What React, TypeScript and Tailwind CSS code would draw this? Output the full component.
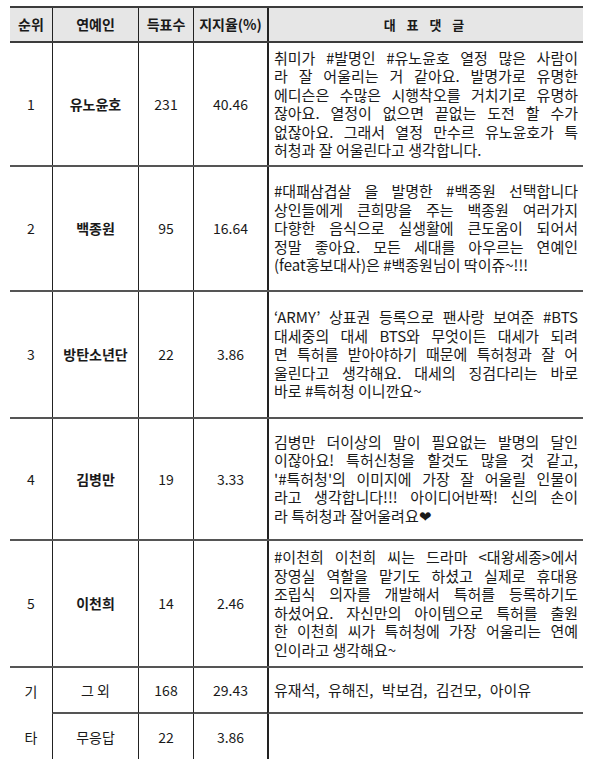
const rows = [
  {
    rank: "1",
    name: "유노윤호",
    votes: "231",
    rate: "40.46",
    h: "h-[124px]",
    lines: [
      "취미가 #발명인 #유노윤호 열정 많은 사람이",
      "라 잘 어울리는 거 같아요. 발명가로 유명한",
      "에디슨은 수많은 시행착오를 거치기로 유명하",
      "잖아요. 열정이 없으면 끝없는 도전 할 수가",
      "없잖아요. 그래서 열정 만수르 유노윤호가 특",
      "허청과 잘 어울린다고 생각합니다.",
    ],
  },
  {
    rank: "2",
    name: "백종원",
    votes: "95",
    rate: "16.64",
    h: "h-[125px]",
    lines: [
      "#대패삼겹살 을 발명한 #백종원 선택합니다",
      "상인들에게 큰희망을 주는 백종원 여러가지",
      "다향한 음식으로 실생활에 큰도움이 되어서",
      "정말 좋아요. 모든 세대를 아우르는 연예인",
      "(feat홍보대사)은 #백종원님이 딱이쥬~!!!",
    ],
  },
  {
    rank: "3",
    name: "방탄소년단",
    votes: "22",
    rate: "3.86",
    h: "h-[127px]",
    lines: [
      "‘ARMY’ 상표권 등록으로 팬사랑 보여준 #BTS",
      "대세중의 대세 BTS와 무엇이든 대세가 되려",
      "면 특허를 받아야하기 때문에 특허청과 잘 어",
      "울린다고 생각해요. 대세의 징검다리는 바로",
      "바로 #특허청 이니깐요~",
    ],
  },
  {
    rank: "4",
    name: "김병만",
    votes: "19",
    rate: "3.33",
    h: "h-[122px]",
    lines: [
      "김병만 더이상의 말이 필요없는 발명의 달인",
      "이잖아요! 특허신청을 할것도 많을 것 같고,",
      "'#특허청'의 이미지에 가장 잘 어울릴 인물이",
      "라고 생각합니다!!! 아이디어반짝! 신의 손이",
      "라 특허청과 잘어울려요❤",
    ],
  },
  {
    rank: "5",
    name: "이천희",
    votes: "14",
    rate: "2.46",
    h: "h-[127px]",
    lines: [
      "#이천희 이천희 씨는 드라마 <대왕세종>에서",
      "장영실 역할을 맡기도 하셨고 실제로 휴대용",
      "조립식 의자를 개발해서 특허를 등록하기도",
      "하셨어요. 자신만의 아이템으로 특허를 출원",
      "한 이천희 씨가 특허청에 가장 어울리는 연예",
      "인이라고 생각해요~",
    ],
  },
]

const grid = "grid grid-cols-[42px_86px_55px_74px_316px]"
const cell = "flex items-center justify-center"

// 줄바꿈은 원본 그대로, 마지막 줄 빼고 양쪽 정렬
function Comment({ lines }: { lines: string[] }) {
  return (
    <div className="w-full pl-[5px] pr-[5px] text-[15px] leading-[18.5px] text-[#1a1a1a]">
      {lines.map((l, i) => (
        <div
          key={i}
          className={i < lines.length - 1 ? "text-justify [text-align-last:justify]" : "text-left"}
        >
          {l}
        </div>
      ))}
    </div>
  )
}

export default function App() {
  return (
    <div
      className="w-[591px] h-[759px] overflow-hidden bg-white pt-[6px] pl-[10px] text-[#1a1a1a]"
      style={{ fontFamily: '"Noto Sans CJK KR", "Noto Sans", sans-serif' }}
    >
      <div className="w-[573px]">
        {/* 헤더 */}
        <div className={`${grid} h-[37px] bg-[#e6e6e6] border-t-2 border-b-2 border-[#3c3c3c] text-[14px] font-bold`}>
          <div className={cell}>순위</div>
          <div className={`${cell} border-l border-[#222]`}>연예인</div>
          <div className={`${cell} border-l border-[#222]`}>득표수</div>
          <div className={`${cell} border-l border-[#222]`}>지지율(%)</div>
          <div className={`${cell} border-l-2 border-[#222] tracking-[4px] text-[13px]`}>대 표 댓 글</div>
        </div>

        {rows.map((r) => (
          <div key={r.rank} className={`${grid} ${r.h} border-b-2 border-[#555] text-[14px]`}>
            <div className={cell}>{r.rank}</div>
            <div className={`${cell} border-l border-[#222] font-bold`}>{r.name}</div>
            <div className={`${cell} border-l border-[#222]`}>{r.votes}</div>
            <div className={`${cell} border-l border-[#222]`}>{r.rate}</div>
            <div className="flex items-center border-l-2 border-[#222]">
              <Comment lines={r.lines} />
            </div>
          </div>
        ))}

        {/* 기타 */}
        <div className={`${grid} h-[46px] text-[14px]`}>
          <div className={cell}>기</div>
          <div className={`${cell} border-l border-b-2 border-[#222] [border-bottom-color:#555]`}>그 외</div>
          <div className={`${cell} border-l border-b-2 border-[#222] [border-bottom-color:#555]`}>168</div>
          <div className={`${cell} border-l border-b-2 border-[#222] [border-bottom-color:#555]`}>29.43</div>
          <div className="flex items-center border-l-2 border-b-2 border-[#222] [border-bottom-color:#555] pl-[5px] text-[15px] [word-spacing:5px]">
            유재석, 유해진, 박보검, 김건모, 아이유
          </div>
        </div>
        <div className={`${grid} h-[46px] text-[14px]`}>
          <div className={cell}>타</div>
          <div className={`${cell} border-l border-[#222]`}>무응답</div>
          <div className={`${cell} border-l border-[#222]`}>22</div>
          <div className={`${cell} border-l border-[#222]`}>3.86</div>
          <div className="border-l-2 border-[#222]" />
        </div>
      </div>
    </div>
  )
}
